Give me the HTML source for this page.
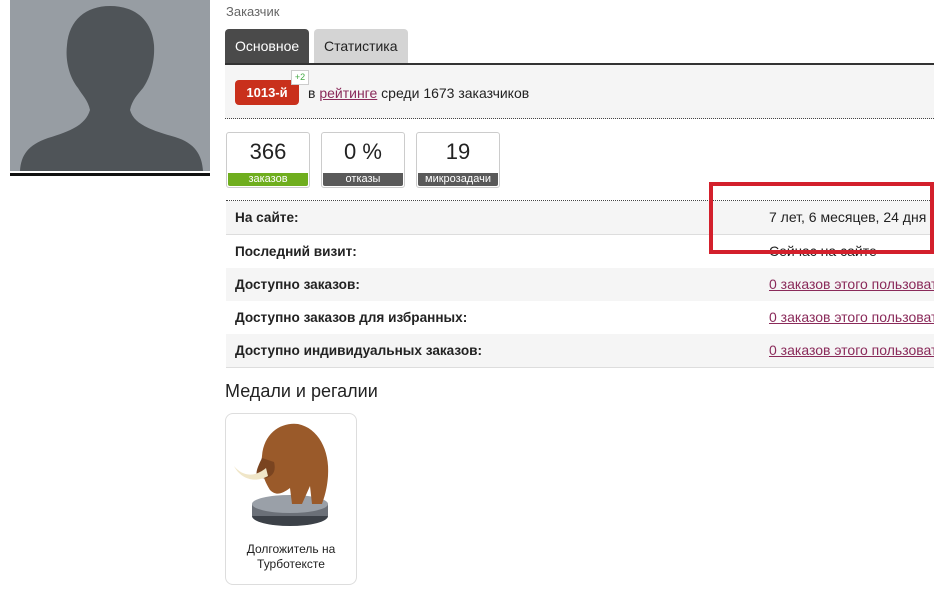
<!DOCTYPE html>
<html><head><meta charset="utf-8"><style>
body{margin:0;width:934px;height:598px;background:#fff;font-family:"Liberation Sans",Arial,sans-serif;position:relative;overflow:hidden;color:#222}
.a{position:absolute}
.tab{position:absolute;top:29px;height:34px;line-height:34px;font-size:14px;padding:0 10px;border-radius:4px 4px 0 0}
.box{position:absolute;top:132px;width:82px;height:54px;border:1px solid #ccc;border-radius:3px;background:#fff;text-align:center}
.box .n{font-size:22px;line-height:38px;color:#222}
.box .l{position:absolute;left:1px;right:1px;bottom:1px;height:13px;line-height:13px;font-size:11px;color:#fff;border-radius:0 0 2px 2px}
.row{position:absolute;left:226px;width:708px;height:33px;border-bottom:1px solid #ddd;font-size:14px;line-height:33px}
.row b{position:absolute;left:9px;font-size:13.6px}
.row span{position:absolute;left:543px;white-space:nowrap}
.row a{color:#8a2a5a;text-decoration:underline}
</style></head><body>
<svg class="a" style="left:10px;top:0" width="200" height="171" viewBox="0 0 200 171">
<rect width="200" height="171" fill="#979da3"/>
<path d="M100 6 C125 6 142 20 144 45 C145 62 140 78 133 88 C128 94 122 100 120 110 C124 124 140 130 165 137 C185 143 192 155 193 171 L10 171 C11 155 18 145 38 138 C62 131 76 124 80 110 C78 100 72 95 68 88 C60 78 55 62 57 45 C59 20 76 6 100 6 Z" fill="#4f5458"/>
</svg>
<div class="a" style="left:10px;top:173px;width:200px;height:3px;background:#111"></div>
<div class="a" style="left:226px;top:4px;font-size:13px;color:#666">Заказчик</div>
<div class="tab" style="left:225px;background:#4a4a4a;color:#fff">Основное</div>
<div class="tab" style="left:314px;background:#d4d4d4;color:#222">Статистика</div>
<div class="a" style="left:225px;top:63px;width:709px;height:2px;background:#333"></div>
<div class="a" style="left:225px;top:65px;width:709px;height:53px;background:#f5f5f5;border-bottom:1px dotted #444"></div>
<div class="a" style="left:235px;top:80px;width:64px;height:25px;background:#c9301c;border-radius:4px;color:#fff;font-weight:bold;font-size:13px;line-height:25px;text-align:center">1013-й</div>
<div class="a" style="left:291px;top:70px;width:16px;height:13px;background:#fff;border:1px solid #ccc;font-size:9px;color:#4a4;line-height:13px;text-align:center">+2</div>
<div class="a" style="left:308px;top:85px;font-size:14px">в <span style="color:#8a2a5a;text-decoration:underline">рейтинге</span> среди 1673 заказчиков</div>
<div class="box" style="left:226px"><div class="n">366</div><div class="l" style="background:#6fae1e">заказов</div></div>
<div class="box" style="left:321px"><div class="n">0 %</div><div class="l" style="background:#5a5a5a">отказы</div></div>
<div class="box" style="left:416px"><div class="n">19</div><div class="l" style="background:#5a5a5a">микрозадачи</div></div>
<div class="a" style="left:226px;top:200px;width:708px;border-top:1px dotted #444"></div>
<div class="row" style="top:201px;background:#f5f5f5"><b>На сайте:</b><span>7 лет, 6 месяцев, 24 дня</span></div>
<div class="row" style="top:235px;background:#fff"><b>Последний визит:</b><span>Сейчас на сайте</span></div>
<div class="row" style="top:268px;background:#f5f5f5"><b>Доступно заказов:</b><span><a>0 заказов этого пользователя</a></span></div>
<div class="row" style="top:301px;background:#fff"><b>Доступно заказов для избранных:</b><span><a>0 заказов этого пользователя</a></span></div>
<div class="row" style="top:334px;background:#f5f5f5"><b>Доступно индивидуальных заказов:</b><span><a>0 заказов этого пользователя</a></span></div>
<div class="a" style="left:709px;top:182px;width:217px;height:64px;border:4px solid #d3202c"></div>
<div class="a" style="left:225px;top:381px;font-size:18px">Медали и регалии</div>
<div class="a" style="left:225px;top:413px;width:130px;height:170px;border:1px solid #ddd;border-radius:8px"></div>
<svg class="a" style="left:226px;top:418px" width="128" height="115" viewBox="0 0 128 115">
<ellipse cx="64" cy="98" rx="38" ry="10" fill="#3c4148"/>
<rect x="26" y="86" width="76" height="12" fill="#6b7078"/>
<ellipse cx="64" cy="86" rx="38" ry="9" fill="#9aa0a8"/>
<path d="M36 38 C38 14 56 4 72 6 C92 10 104 32 102 58 C101 72 98 80 96 86 L86 86 L84 68 L76 86 L66 86 L64 70 C56 76 50 78 44 72 C38 62 34 52 36 38Z" fill="#9a5a2a"/>
<path d="M36 40 C30 52 26 62 40 60 C48 58 50 52 48 44Z" fill="#7a4420"/>
<path d="M40 50 C28 60 16 58 8 48 C14 60 28 66 42 58Z" fill="#f0e6c8"/>
</svg>
<div class="a" style="left:225px;top:542px;width:132px;text-align:center;font-size:12px;line-height:15px">Долгожитель на<br>Турботексте</div>
</body></html>
